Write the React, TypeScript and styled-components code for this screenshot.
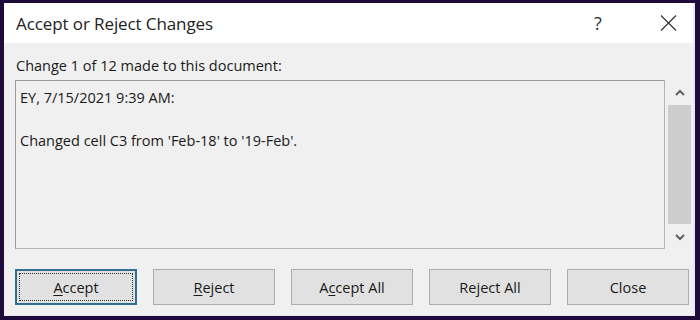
import styled, { createGlobalStyle } from 'styled-components'

const GlobalStyle = createGlobalStyle`
  html, body {
    margin: 0;
    padding: 0;
    background: #1e0b3c;
  }
  body {
    font-family: 'Open Sans', 'Noto Sans', sans-serif;
    color: #1a1a1a;
  }
`

const Window = styled.div`
  margin: 3px 5px 0 4px;
  width: 689px;
  height: 312px;
  background: #f0f0f0;
  border-right: 2px solid #ebe6f3;
  border-bottom: 1px solid #ebe6f3;
  display: flex;
  flex-direction: column;
`

const TitleBar = styled.div`
  height: 40px;
  background: #ffffff;
  display: flex;
  align-items: center;
  padding-left: 12px;
`

const Title = styled.span`
  flex: 1;
  font-size: 17px;
  color: #222;
  letter-spacing: -0.1px;
`

const TitleButton = styled.button<{ $wide?: boolean }>`
  width: ${(p) => (p.$wide ? '50px' : '44px')};
  height: 40px;
  border: none;
  background: transparent;
  display: flex;
  align-items: center;
  justify-content: center;
  font-family: inherit;
  font-size: 18px;
  color: #333;
  padding: 0;
`

const HelpButton = styled(TitleButton)`
  margin-right: 23px;
`

const Body = styled.div`
  padding: 13px 0 0 11px;
`

const Label = styled.div`
  font-size: 14.5px;
  line-height: 20px;
  padding-left: 1px;
  margin-bottom: 4px;
`

const Row = styled.div`
  display: flex;
  gap: 3px;
`

const TextBox = styled.div`
  width: 650px;
  height: 169px;
  box-sizing: border-box;
  border: 1px solid #b4b4b4;
  border-top-color: #9a9a9a;
  border-left-color: #9a9a9a;
  background: #f0f0f0;
  padding: 6px 4px;
  font-size: 14.5px;
  line-height: 21.5px;
`

const Scrollbar = styled.div`
  width: 23px;
  height: 169px;
  display: flex;
  flex-direction: column;
`

const ScrollArrow = styled.div`
  height: 24px;
  display: flex;
  align-items: center;
  justify-content: center;
`

const ScrollTrack = styled.div`
  flex: 1;
  padding: 1px 0;
  display: flex;
`

const Thumb = styled.div`
  flex: 1;
  background: #cdcdcd;
`

const ButtonRow = styled.div`
  display: flex;
  gap: 16px;
  margin-top: 20px;
`

const Button = styled.button<{ $focused?: boolean }>`
  width: 122px;
  height: 36px;
  box-sizing: border-box;
  background: #e1e1e1;
  border: 1px solid ${(p) => (p.$focused ? '#2f6e8e' : '#adadad')};
  box-shadow: ${(p) => (p.$focused ? 'inset 0 0 0 1px #2f6e8e' : 'none')};
  font-family: inherit;
  font-size: 14.5px;
  color: #1a1a1a;
  padding: 0;
  display: flex;
  align-items: center;
  justify-content: center;
  position: relative;
  &::after {
    content: '';
    display: ${(p) => (p.$focused ? 'block' : 'none')};
    position: absolute;
    inset: 3px;
    border: 1px dotted #333;
  }
  u {
    text-underline-offset: 2px;
  }
`

const Chevron = ({ up }: { up?: boolean }) => (
  <svg width="10" height="7" viewBox="0 0 10 7">
    <path
      d={up ? 'M1 6 L5 2 L9 6' : 'M1 1 L5 5 L9 1'}
      fill="none"
      stroke="#606060"
      strokeWidth="2"
    />
  </svg>
)

export default function App() {
  return (
    <>
      <GlobalStyle />
      <Window>
        <TitleBar>
          <Title>Accept or Reject Changes</Title>
          <HelpButton>?</HelpButton>
          <TitleButton $wide>
            <svg width="17" height="16" viewBox="0 0 17 16">
              <path d="M1 0.5 L16 15.5 M16 0.5 L1 15.5" stroke="#333" strokeWidth="1.2" />
            </svg>
          </TitleButton>
        </TitleBar>
        <Body>
          <Label>Change 1 of 12 made to this document:</Label>
          <Row>
            <TextBox>
              EY, 7/15/2021 9:39 AM:
              <br />
              <br />
              Changed cell C3 from 'Feb-18' to '19-Feb'.
            </TextBox>
            <Scrollbar>
              <ScrollArrow>
                <Chevron up />
              </ScrollArrow>
              <ScrollTrack>
                <Thumb />
              </ScrollTrack>
              <ScrollArrow>
                <Chevron />
              </ScrollArrow>
            </Scrollbar>
          </Row>
          <ButtonRow>
            <Button $focused>
              <span>
                <u>A</u>ccept
              </span>
            </Button>
            <Button>
              <span>
                <u>R</u>eject
              </span>
            </Button>
            <Button>
              <span>
                A<u>c</u>cept All
              </span>
            </Button>
            <Button>
              <span>
                Re<u>j</u>ect All
              </span>
            </Button>
            <Button>Close</Button>
          </ButtonRow>
        </Body>
      </Window>
    </>
  )
}
